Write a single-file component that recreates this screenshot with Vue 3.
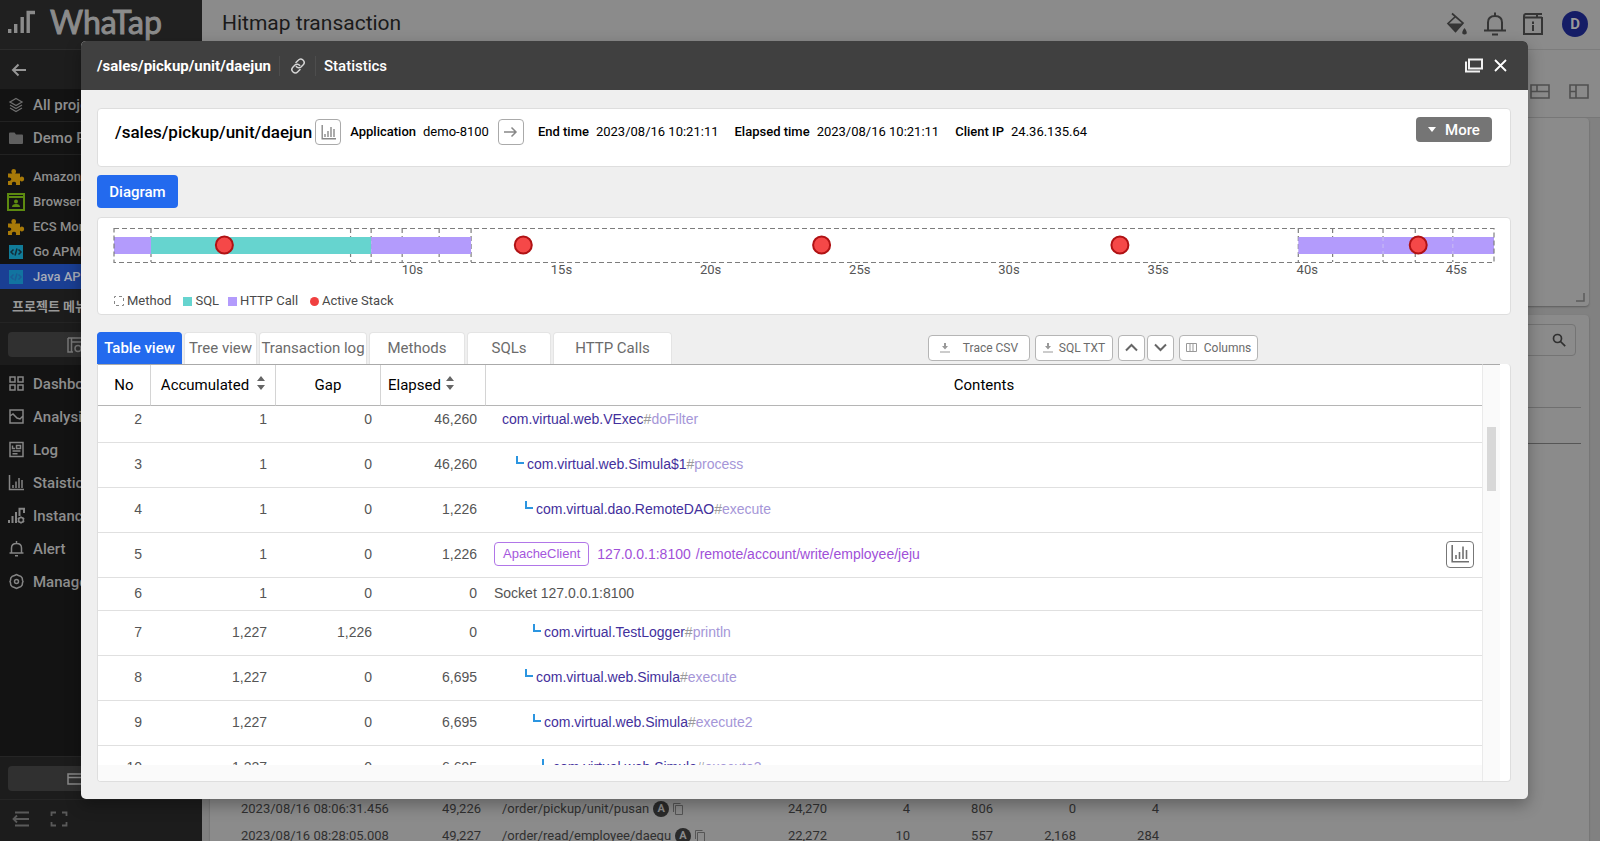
<script setup>
const products = [
  { name: 'Amazon CloudWatch', icon: 'puzzle' },
  { name: 'Browser', icon: 'browser' },
  { name: 'ECS Monitoring', icon: 'puzzle' },
  { name: 'Go APM', icon: 'code' },
  { name: 'Java APM', icon: 'code', active: true },
]
const menu = [
  { name: 'Dashboard', icon: 'grid' },
  { name: 'Analysis', icon: 'analysis' },
  { name: 'Log', icon: 'log' },
  { name: 'Staistics', icon: 'chart' },
  { name: 'Instance', icon: 'instance' },
  { name: 'Alert', icon: 'bell' },
  { name: 'Management', icon: 'gear' },
]
const hits = [
  { time: '2023/08/16 08:06:31.456', id: '49,226', path: '/order/pickup/unit/pusan', nums: ['24,270', '4', '806', '0', '4'] },
  { time: '2023/08/16 08:28:05.008', id: '49,227', path: '/order/read/employee/daegu', nums: ['22,272', '10', '557', '2,168', '284'] },
]

const total = 46.26
const pct = (t) => (t / total) * 100 + '%'
const segments = [
  { from: 0, to: 1.24, color: '#b39bfc' },
  { from: 1.24, to: 8.62, color: '#66d4cf' },
  { from: 8.62, to: 11.97, color: '#b39bfc' },
  { from: 39.7, to: 46.26, color: '#b39bfc' },
]
const methodEdges = [1.24, 7.93, 8.62, 9.66, 10.9, 11.97, 39.7, 40.85, 42.54, 43.62, 44.88]
const innerEdges = [42.54, 44.88]
const stacks = [3.7, 13.72, 23.72, 33.72, 43.72]
const ticks = [10, 15, 20, 25, 30, 35, 40, 45]

const tabs = ['Table view', 'Tree view', 'Transaction log', 'Methods', 'SQLs', 'HTTP Calls']
const rows = [
  { no: 2, acc: '1', gap: '0', elapsed: '46,260', depth: 0, cls: 'com.virtual.web.VExec', fn: 'doFilter' },
  { no: 3, acc: '1', gap: '0', elapsed: '46,260', depth: 1, cls: 'com.virtual.web.Simula$1', fn: 'process' },
  { no: 4, acc: '1', gap: '0', elapsed: '1,226', depth: 2, cls: 'com.virtual.dao.RemoteDAO', fn: 'execute' },
  { no: 5, acc: '1', gap: '0', elapsed: '1,226', kind: 'http' },
  { no: 6, acc: '1', gap: '0', elapsed: '0', kind: 'socket' },
  { no: 7, acc: '1,227', gap: '1,226', elapsed: '0', depth: 3, cls: 'com.virtual.TestLogger', fn: 'println' },
  { no: 8, acc: '1,227', gap: '0', elapsed: '6,695', depth: 2, cls: 'com.virtual.web.Simula', fn: 'execute' },
  { no: 9, acc: '1,227', gap: '0', elapsed: '6,695', depth: 3, cls: 'com.virtual.web.Simula', fn: 'execute2' },
  { no: 10, acc: '1,227', gap: '0', elapsed: '6,695', depth: 4, cls: 'com.virtual.web.Simula', fn: 'execute3' },
]
</script>

<template>
  <div class="shell">
    <aside class="side">
      <div class="brand">
        <svg width="28" height="24" viewBox="0 0 28 24" fill="none" stroke="#8b8b8b" stroke-width="3.400">
          <path d="M1.700 23v-4M7.700 23V14M14.200 23V7M20.200 23V2.500H27" />
        </svg>
        <span class="brand-name">WhaTap</span>
      </div>
      <button class="back" aria-label="Back">
        <svg width="16" height="14" viewBox="0 0 16 14" fill="none" stroke="#969696" stroke-width="2"><path d="M15 7H2M7.500 1.500 2 7l5.500 5.500" /></svg>
      </button>
      <a class="top-link" href="#">
        <svg width="16" height="16" viewBox="0 0 16 16" fill="none" stroke="#6f6f6f" stroke-width="1.300"><path d="M8 1.500 14 5 8 8.500 2 5zM2 8l6 3.500L14 8M2 11l6 3.500 6-3.500" /></svg>
        All projects
      </a>
      <a class="top-link" href="#">
        <svg width="16" height="16" viewBox="0 0 16 16" fill="#606060"><path d="M1 3.500q0-1 1-1h4.500l1.500 2H14q1 0 1 1v7.500q0 1-1 1H2q-1 0-1-1z" /></svg>
        Demo Project
      </a>
      <nav class="products">
        <a v-for="p in products" :key="p.name" href="#" :class="{ active: p.active }">
          <svg v-if="p.icon === 'puzzle'" width="18" height="18" viewBox="0 0 18 18" fill="#a87a08"><path d="M1 5.500h4.300Q4.300 4.600 4.300 3.300 4.500 1 6.700 1t2.400 2.300q0 1.300-1 2.200H13v4q.8-1 2-1Q17.200 8.700 17.200 11T15 13.400q-1.200 0-2-1V17H9q.7-3.300-2-3.300T5 17H1v-4q3.300 0 3.300-2T1 9.500z" /></svg>
          <svg v-else-if="p.icon === 'browser'" width="18" height="18" viewBox="0 0 18 18" fill="none"><path d="M1 1h16v16H1zM1 4h16" stroke="#5d8a10" stroke-width="2" /><circle cx="9" cy="8.500" r="2" fill="#5d8a10" /><path d="M5 14q0-3 4-3t4 3z" fill="#5d8a10" /></svg>
          <svg v-else width="18" height="18" viewBox="0 0 18 18" fill="none"><path d="M2 2h14v14H2z" :fill="p.active ? '#1274a0' : '#117c99'" /><path d="M6.500 6.500 4 9l2.500 2.500M11.500 6.500 14 9l-2.500 2.500M10 5.500l-2 7" :stroke="p.active ? '#1c5c96' : '#122c38'" stroke-width="1.500" /></svg>
          {{ p.name }}
        </a>
      </nav>
      <div class="menu-title">프로젝트 메뉴</div>
      <div class="side-action">
        <button aria-label="Project settings">
          <svg width="16" height="16" viewBox="0 0 16 16" fill="none" stroke="#777" stroke-width="1.500"><path d="M1 1h14v7M1 1v14h5M4.500 1v14M4.500 5H15" /><circle cx="11" cy="11.500" r="3" /></svg>
        </button>
      </div>
      <nav class="menu">
        <a v-for="m in menu" :key="m.name" href="#">
          <svg width="17" height="17" viewBox="0 0 17 17" fill="none" stroke="#858585" stroke-width="1.500">
            <path v-if="m.icon === 'grid'" d="M2 2h5v5H2zM10 2h5v5h-5zM2 10h5v5H2zM10 10h5v5h-5z" />
            <path v-else-if="m.icon === 'analysis'" d="M2 2h13v13H2zM2 8l3-2 4 4 3 1 3-3" />
            <path v-else-if="m.icon === 'log'" d="M2 1.500h13v14H2zM4.500 4.500v3H7M8.500 4.500h4v3h-4zM4.500 10h8M4.500 12.700h5" />
            <path v-else-if="m.icon === 'chart'" d="M1.500 1v14.500H16M5 14v-3M8 14V7.500M11 14V4M14 14V6" />
            <template v-else-if="m.icon === 'instance'">
              <path d="M1 16v-3M4.500 16V9M8 16V5M11.500 9V1.700H16V6" stroke-width="2" />
              <circle cx="13" cy="13" r="2.500" /><path d="M13 9.500v1.500M13 15v1.500M9.800 11.200l1.500.8M14.700 14l1.500.8M9.800 14.800l1.500-.8M14.700 12l1.500-.8" />
            </template>
            <path v-else-if="m.icon === 'bell'" d="M1.500 13h14M3.500 13V8q0-4.500 5-4.500t5 4.500v5M8.500 3.500V1M7 15.700h3" />
            <template v-else>
              <path d="m6.500 2.500 2-1 2 1 2.300.8 1.400 1.700.3 2.200.5 1.300-.5 1.300-.3 2.200-1.400 1.700-2.300.8-2 1-2-1-2.300-.8L2.800 12l-.3-2.200L2 8.500l.5-1.300.3-2.200 1.400-1.700z" /><circle cx="8.500" cy="8.500" r="2" />
            </template>
          </svg>
          {{ m.name }}
        </a>
      </nav>
      <div class="side-action bottom">
        <button aria-label="Billing">
          <svg width="16" height="12" viewBox="0 0 16 12" fill="none" stroke="#888" stroke-width="1.500"><path d="M1 1h15v10H1zM1 4.500h15" /></svg>
        </button>
      </div>
      <div class="side-foot">
        <button aria-label="Collapse menu"><svg width="18" height="16" viewBox="0 0 18 16" fill="none" stroke="#5a5a5a" stroke-width="1.800"><path d="M3 1.500h14M1.500 8H17M3 14.500h14M5 4.500 1.500 8 5 11.500" /></svg></button>
        <button aria-label="Full screen"><svg width="18" height="16" viewBox="0 0 18 16" fill="none" stroke="#5a5a5a" stroke-width="1.800"><path d="M1.500 5V1.500H6M12 1.500h4.500V5M16.500 11v3.500H12M6 14.500H1.500V11" /></svg></button>
      </div>
    </aside>

    <main class="page">
      <header class="page-head">
        <h1>Hitmap transaction</h1>
        <div class="head-icons">
          <svg width="22" height="24" viewBox="0 0 22 24" fill="none"><path d="M6 1.500 17 11l-7.500 8.500L2 11.500l7.500-7" stroke="#353535" stroke-width="1.700" /><path d="M2 11.500h15L9.500 20z" fill="#353535" /><path d="M18.500 16q2.200 2.700 2.200 4a2.200 2.200 0 0 1-2.200 2.500 2.200 2.200 0 0 1-2.200-2.500q0-1.300 2.200-4z" fill="#353535" /></svg>
          <svg width="22" height="24" viewBox="0 0 22 24" fill="none" stroke="#353535" stroke-width="2"><path d="M0 18.500h22M4 18V10.500Q4 4 11 4t7 6.500V18M11 4V.500M8 22.500h6" /></svg>
          <svg width="22" height="24" viewBox="0 0 22 24" fill="none" stroke="#353535" stroke-width="2"><path d="M20 5.500H3.500Q2 5.500 2 4T3.500 2H20M2 3.500V22h18V5M15 2v3M11 13v6M11 9.500V12" /></svg>
          <span class="avatar">D</span>
        </div>
      </header>
      <div class="page-tools">
        <svg width="20" height="15" viewBox="0 0 20 15" fill="none" stroke="#505050" stroke-width="1.600"><path d="M1 1h18v13H1zM1 7.500h18M7 1v6.500" /></svg>
        <svg width="20" height="15" viewBox="0 0 20 15" fill="none" stroke="#505050" stroke-width="1.600"><path d="M1 1h18v13H1zM7 1v13M1 7.500h6" /></svg>
      </div>
      <div class="page-body">
        <section class="bg-card chart-card">
          <svg width="9" height="9" viewBox="0 0 9 9" fill="none" stroke="#5c5c5c" stroke-width="1.500"><path d="M8 0v8H0" /></svg>
        </section>
        <section class="bg-card list-card">
          <label class="search">
            <input type="text" aria-label="Search" />
            <svg width="14" height="14" viewBox="0 0 14 14" fill="none" stroke="#303030" stroke-width="1.700"><circle cx="5.500" cy="5.500" r="4" /><path d="m8.500 8.500 4.700 4.700" /></svg>
          </label>
          <div class="list-head"></div>
          <table class="hits">
            <tbody>
              <tr v-for="h in hits" :key="h.id">
                <td class="c-time">{{ h.time }}</td>
                <td class="c-id">{{ h.id }}</td>
                <td class="c-path">
                  <span class="path-wrap">{{ h.path }}<b class="a-badge">A</b>
                    <svg width="10" height="12" viewBox="0 0 10 12" fill="none" stroke="#555" stroke-width="1"><path d="M2.500 2.500h7v9h-7zM.5 9V.500h7" /></svg>
                  </span>
                </td>
                <td v-for="(n, i) in h.nums" :key="i" class="c-num">{{ n }}</td>
                <td></td>
              </tr>
            </tbody>
          </table>
        </section>
      </div>
    </main>

    <div class="modal" role="dialog" aria-label="Transaction detail">
      <header class="modal-head">
        <strong>/sales/pickup/unit/daejun</strong>
        <button class="link-btn" aria-label="Copy link">
          <svg width="16" height="16" viewBox="0 0 16 16" fill="none" stroke="#d4d4d4" stroke-width="1.500" stroke-linecap="round"><path d="m6 4.500 2.200-2.200a3.200 3.200 0 0 1 5 4.500L11 9a3.200 3.200 0 0 1-4.700-.5" /><path d="m10 11.500-2.200 2.200a3.200 3.200 0 0 1-5-4.500L5 7a3.200 3.200 0 0 1 4.700.5" /></svg>
        </button>
        <a href="#">Statistics</a>
        <div class="win">
          <button aria-label="Open in window"><svg width="18" height="15" viewBox="0 0 18 15" fill="none" stroke="#f2f2f2" stroke-width="2"><path d="M4 1.500h13v9H4z" /><path d="M1 3.500V13.500h14" /></svg></button>
          <button aria-label="Close"><svg width="13" height="13" viewBox="0 0 13 13" fill="none" stroke="#fff" stroke-width="1.800"><path d="m1 1 11 11M12 1 1 12" /></svg></button>
        </div>
      </header>

      <div class="modal-body">
        <section class="card info">
          <h2>/sales/pickup/unit/daejun</h2>
          <button class="sq" aria-label="Statistics chart">
            <svg width="15" height="15" viewBox="0 0 15 15" fill="none" stroke="#888" stroke-width="1.400"><path d="M1.200 0v13.800H15M4 12V9M7 12V6M10 12V2M13 12V4" /></svg>
          </button>
          <dl>
            <div><dt>Application</dt><dd>demo-8100</dd></div>
          </dl>
          <button class="sq" aria-label="Go to application">
            <svg width="14" height="12" viewBox="0 0 14 12" fill="none" stroke="#888" stroke-width="1.500"><path d="M0 6h12M7.500 1.500 12 6l-4.500 4.500" /></svg>
          </button>
          <dl class="times">
            <div><dt>End time</dt><dd>2023/08/16 10:21:11</dd></div>
            <div><dt>Elapsed time</dt><dd>2023/08/16 10:21:11</dd></div>
            <div><dt>Client IP</dt><dd>24.36.135.64</dd></div>
          </dl>
          <button class="more"><svg width="8" height="5" viewBox="0 0 8 5" fill="#fff"><path d="M0 0h8L4 5z" /></svg>More</button>
        </section>

        <button class="diagram-btn">Diagram</button>

        <section class="card diagram">
          <svg class="timeline" width="100%" height="54">
            <g stroke="#7d7d7d" stroke-width="1.200" stroke-dasharray="5 3" fill="none">
              <line v-for="e in methodEdges" :key="e" :x1="pct(e)" :x2="pct(e)" y1="0" y2="34" />
            </g>
            <rect v-for="s in segments" :key="s.from" :x="pct(s.from)" y="9" :width="pct(s.to - s.from)" height="17" :fill="s.color" />
            <line v-for="e in innerEdges" :key="e" :x1="pct(e)" :x2="pct(e)" y1="9" y2="26" stroke="#c9bdf2" stroke-dasharray="4 3" />
            <rect x="0" y="0.500" width="100%" height="34" fill="none" stroke="#7d7d7d" stroke-width="1.200" stroke-dasharray="5 3" />
            <circle v-for="s in stacks" :key="s" :cx="pct(s)" cy="17" r="8.500" fill="#f54848" stroke="#b01214" stroke-width="2" />
            <text v-for="t in ticks" :key="t" :x="pct(t)" y="46" text-anchor="middle">{{ t }}s</text>
          </svg>
          <ul class="legend">
            <li><svg width="10" height="10" viewBox="0 0 10 10"><rect x=".5" y=".5" width="9" height="9" fill="none" stroke="#888" stroke-dasharray="3 3" stroke-dashoffset="1.500" /></svg>Method</li>
            <li><i class="dot sql"></i>SQL</li>
            <li><i class="dot http"></i>HTTP Call</li>
            <li><i class="dot stack"></i>Active Stack</li>
          </ul>
        </section>

        <div class="bar">
          <div class="tabs" role="tablist">
            <button v-for="(t, i) in tabs" :key="t" role="tab" :aria-selected="i === 0" :class="{ on: i === 0 }">{{ t }}</button>
          </div>
          <div class="tools">
            <button class="csv"><svg width="10" height="10" viewBox="0 0 10 10" fill="#999"><path d="M4 0h2v3h2L5 6.500 2 3h2zM0 8.500h10v1H0z" /></svg>Trace CSV</button>
            <button class="txt"><svg width="10" height="10" viewBox="0 0 10 10" fill="#999"><path d="M4 0h2v3h2L5 6.500 2 3h2zM0 8.500h10v1H0z" /></svg>SQL TXT</button>
            <div class="pair">
              <button aria-label="Previous"><svg width="13" height="9" viewBox="0 0 13 9" fill="none" stroke="#666" stroke-width="2"><path d="m1 7.500 5.500-5.500L12 7.500" /></svg></button>
              <button aria-label="Next"><svg width="13" height="9" viewBox="0 0 13 9" fill="none" stroke="#666" stroke-width="2"><path d="m1 1.500 5.500 5.500L12 1.500" /></svg></button>
            </div>
            <button class="cols"><svg width="11" height="9" viewBox="0 0 11 9" fill="none" stroke="#999"><path d="M.5.500h10v8H.500zM4 .500v8M7 .500v8" /></svg>Columns</button>
          </div>
        </div>

        <section class="grid-card">
          <div class="grid-view">
            <table class="trace">
              <colgroup><col class="w-no" /><col class="w-acc" /><col class="w-gap" /><col class="w-el" /><col /></colgroup>
              <thead>
                <tr>
                  <th>No</th>
                  <th>Accumulated<svg width="8" height="14" viewBox="0 0 8 14" fill="#666"><path d="M0 5h8L4 0zM0 9h8l-4 5z" /></svg></th>
                  <th>Gap</th>
                  <th class="left">Elapsed<svg width="8" height="14" viewBox="0 0 8 14" fill="#666"><path d="M0 5h8L4 0zM0 9h8l-4 5z" /></svg></th>
                  <th>Contents</th>
                </tr>
              </thead>
              <tbody>
                <tr v-for="r in rows" :key="r.no" :class="{ short: r.kind === 'socket', cut: r.no === 2 }">
                  <td>{{ r.no }}</td>
                  <td>{{ r.acc }}</td>
                  <td>{{ r.gap }}</td>
                  <td>{{ r.elapsed }}</td>
                  <td class="content">
                    <div v-if="r.kind === 'http'" class="http-row">
                      <span class="client">ApacheClient</span>
                      <span class="url">127.0.0.1:8100</span>
                      <span class="url">/remote/account/write/employee/jeju</span>
                      <button aria-label="Call statistics">
                        <svg width="18" height="18" viewBox="0 0 18 18" fill="none" stroke="#707070" stroke-width="1.600"><path d="M1.200 0v16.800H18M5 14v-4M8.500 14V7M12 14V1.500M15.500 14V5" /></svg>
                      </button>
                    </div>
                    <template v-else-if="r.kind === 'socket'">Socket 127.0.0.1:8100</template>
                    <div v-else class="call" :class="'d' + r.depth">
                      <i v-if="r.depth" class="elbow"></i><span>{{ r.cls }}</span><em>#</em><u>{{ r.fn }}</u>
                    </div>
                  </td>
                </tr>
              </tbody>
            </table>
          </div>
          <div class="scroll"><i></i></div>
        </section>
      </div>
    </div>
  </div>
</template>

<style>
body { margin: 0; overflow: hidden; }
</style>

<style scoped>
* { box-sizing: border-box; }
.shell { position: relative; display: flex; height: 100vh; overflow: hidden; font-family: Roboto, "Noto Sans CJK KR", sans-serif; font-size: 14px; background: #858585; }
button { font: inherit; border: 0; background: none; padding: 0; margin: 0; color: inherit; display: flex; align-items: center; justify-content: center; }
a { color: inherit; text-decoration: none; }
svg { flex: none; display: block; }

.side { width: 202px; flex: none; background: #131313; color: #8e8e8e; display: flex; flex-direction: column; font-size: 15px; font-weight: 500; }
.brand { height: 50px; background: #202020; border-bottom: 1px solid #2c2c2c; display: flex; align-items: center; gap: 14px; padding: 0 8px 6px; }
.brand-name { font-family: Lato, sans-serif; font-weight: 400; font-size: 32px; line-height: 40px; color: #8b8b8b; -webkit-text-stroke: 1px #8b8b8b; }
.back { height: 39px; background: #1d1d1d; justify-content: flex-start; padding-left: 11px; }
.top-link { height: 33px; display: flex; align-items: center; gap: 9px; padding-left: 8px; border-bottom: 1px solid #222; }
.products { padding-top: 9px; font-size: 13px; }
.products a { height: 25px; display: flex; align-items: center; gap: 8px; padding-left: 7px; }
.products a.active { background: #1a3f94; color: #a6acb8; }
.menu-title { height: 34px; display: flex; align-items: center; padding-left: 12px; background: #1c1c1c; border-bottom: 1px solid #242424; font-size: 13px; font-weight: 700; color: #999; }
.side-action { background: #1c1c1c; padding: 9px 8px 8px; }
.side-action button { width: 100%; height: 25px; background: #303030; border-radius: 4px; justify-content: flex-start; padding-left: 59px; }
.menu { flex: 1; padding-top: 2px; }
.menu a { height: 33px; display: flex; align-items: center; gap: 8px; padding-left: 8px; }
.bottom { border-top: 1px solid #252525; border-bottom: 1px solid #252525; }
.side-foot { background: #1c1c1c; height: 41px; display: flex; gap: 20px; align-items: center; padding: 0 12px 4px; }

.page { flex: 1; min-width: 0; display: flex; flex-direction: column; }
.page-head { height: 50px; flex: none; background: #8b8b8b; border-bottom: 1px solid #7c7c7c; display: flex; align-items: center; justify-content: space-between; padding: 0 12px 2px 20px; }
h1 { margin: 0; padding-bottom: 2px; font-size: 21px; line-height: 28px; font-weight: 400; color: #1a1a1a; }
.head-icons { display: flex; align-items: center; gap: 16px; }
.avatar { width: 26px; height: 26px; margin-left: 2px; border-radius: 50%; background: #151d66; color: #999; font-size: 15px; font-weight: 700; display: flex; align-items: center; justify-content: center; }
.page-tools { height: 68px; flex: none; background: #8a8a8a; border-bottom: 1px solid #777; display: flex; justify-content: flex-end; align-items: center; gap: 19px; padding: 16px 11px 0 0; }
.page-body { flex: 1; min-height: 0; overflow: hidden; padding: 0 11px 0 8px; display: flex; flex-direction: column; gap: 9px; background: #818181; }
.bg-card { background: #8b8b8b; border-radius: 4px; box-shadow: 0 1px 2px #5d5d5d; }
.chart-card { height: 188px; flex: none; display: flex; justify-content: flex-end; align-items: flex-end; padding: 4px; }
.list-card { flex: none; height: 560px; padding: 9px 8px 0; }
.search { display: flex; align-items: center; height: 32px; margin-right: 5px; border: 1px solid #747474; border-radius: 4px; padding-right: 9px; }
.search input { flex: 1; border: 0; background: none; outline: none; }
.list-head { margin-top: 51px; height: 37px; border-top: 1px solid #6f6f6f; border-bottom: 1px solid #565656; }
.hits { margin-top: 351px; width: 100%; border-collapse: collapse; table-layout: fixed; color: #303030; font-size: 13px; }
.hits td { height: 27px; padding: 0; }
.hits .c-time { width: 177px; padding-left: 23px; white-space: nowrap; }
.c-id { width: 86px; text-align: right; }
.hits .c-path { width: 263px; padding-left: 21px; }
.c-num { width: 83px; text-align: right; }
.path-wrap { display: flex; align-items: center; gap: 4px; }
.a-badge { width: 16px; height: 16px; border-radius: 50%; background: #2a2a2a; color: #8b8b8b; font-size: 11px; line-height: 16px; text-align: center; }

.modal { position: absolute; inset: 41px 72px 42px 81px; background: #efefef; border-radius: 5px; overflow: hidden; display: flex; flex-direction: column; color: #000; box-shadow: 0 6px 16px rgba(0, 0, 0, 0.3); }
.modal-head { height: 49px; flex: none; background: #404040; color: #fff; display: flex; align-items: center; padding: 0 21px 0 16px; font-size: 15px; font-weight: 500; }
.modal-head strong { font-weight: 700; }
.link-btn { width: 37px; height: 20px; margin: 0 8px; border-left: 1px solid #4d4d4d; border-right: 1px solid #4d4d4d; }
.win { margin-left: auto; display: flex; gap: 11px; align-items: center; }
.modal-body { flex: 1; min-height: 0; display: flex; flex-direction: column; padding: 18px 17px 17px 16px; }
.card { background: #fff; border: 1px solid #dedede; border-radius: 4px; flex: none; }
.info { height: 59px; display: flex; align-items: flex-start; padding: 8px 18px 0 17px; line-height: 30px; }
.info h2 { margin: 0; font-size: 17px; font-weight: 500; padding-right: 3px; }
.sq { width: 26px; height: 26px; margin-top: 2px; border: 1px solid #aaa; border-radius: 4px; }
.info dl { margin: 0; display: flex; font-size: 13px; }
.info dl div { display: flex; padding: 0 9px; gap: 7px; }
.info .times { gap: 2px; }
.info .times div { padding: 0 0 0 14px; }
dt { font-weight: 500; }
dd { margin: 0; }
.more { margin-left: auto; width: 76px; height: 25px; background: #757575; color: #fff; border-radius: 4px; gap: 9px; font-size: 15px; font-weight: 500; }
.diagram-btn { flex: none; width: 81px; height: 33px; margin: 8px 0 9px; background: #236aee; color: #fff; border-radius: 4px; font-size: 15px; font-weight: 500; }
.diagram { height: 98px; padding: 10px 16px 0; }
.timeline { overflow: visible; }
.timeline text { font-size: 13px; fill: #555; }
.legend { list-style: none; margin: 11px 0 0; padding: 0; display: flex; font-size: 13px; line-height: 16px; color: #4a4a4a; }
.legend li { display: flex; align-items: center; gap: 3px; margin-right: 12px; }
.legend li:nth-child(2) { margin-right: 9px; }
.dot { width: 9px; height: 9px; }
.sql { background: #66d4cf; }
.http { background: #b39bfc; }
.stack { background: #f04040; border-radius: 50%; }

.bar { display: flex; margin-top: 17px; flex: none; height: 32px; }
.tabs { display: grid; grid-template-columns: 85px 73px 108px 96px 84px 119px; gap: 2px; font-size: 15px; color: #6b6b6b; }
.tabs button { background: #fff; border: 1px solid #e4e4e4; border-bottom: 0; border-radius: 4px 4px 0 0; white-space: nowrap; padding-bottom: 2px; }
.tabs .on { background: #236aee; border-color: #236aee; color: #fff; font-weight: 500; }
.tools { margin: 3px 253px 0 auto; display: flex; gap: 5px; font-size: 12px; color: #6b6b6b; }
.tools button { height: 26px; background: #fff; border: 1px solid #b5b5b5; border-radius: 4px; white-space: nowrap; padding-bottom: 1px; }
.csv { width: 102px; gap: 13px; }
.txt { width: 78px; gap: 6px; }
.pair { display: flex; gap: 2px; }
.pair button { width: 27px; }
.cols { width: 79px; gap: 7px; }

.grid-card { flex: 1; min-height: 0; display: flex; background: #fff; border: 1px solid #dedede; border-top: 0; border-radius: 0 4px 4px 4px; padding-right: 10px; overflow: hidden; }
.grid-view { flex: 1; min-width: 0; overflow: hidden; border-bottom: 16px solid #fafafa; border-top: 1px solid #aaa; }
.trace { width: 100%; border-collapse: separate; border-spacing: 0; table-layout: fixed; }
.w-no { width: 53px; }
.w-acc { width: 125px; }
.w-gap { width: 105px; }
.w-el { width: 105px; }
.trace th { height: 41px; padding: 0; font-size: 15px; font-weight: 400; border-right: 1px solid #d4d4d4; border-bottom: 1px solid #b5b5b5; }
.trace th:last-child { border-right: 0; }
.trace th svg { display: inline-block; margin-left: 8px; }
.trace th.left { text-align: left; padding-left: 7px; }
.trace th.left svg { margin-left: 5px; }
.trace td { height: 45px; padding: 0 9px 2px 0; text-align: right; border-bottom: 1px solid #e0e0e0; font-family: "Liberation Sans", Arial, sans-serif; font-size: 14px; line-height: 16px; color: #555; }
.trace .short td { height: 33px; }
.trace .cut td { height: 37px; padding-bottom: 11px; }
.trace .content { text-align: left; padding-left: 8px; padding-right: 8px; }
.http-row { display: flex; align-items: center; }
.client { border: 1px solid #b176e8; border-radius: 4px; color: #a557dd; font-size: 13px; line-height: 22px; padding: 0 8px; margin-right: 8px; }
.url { color: #a04fd8; margin-right: 5px; }
.http-row button { margin-left: auto; width: 28px; height: 27px; border: 1px solid #777; border-radius: 4px; }
.call { display: flex; color: #43309c; }
.call em { font-style: normal; color: #999; }
.call u { text-decoration: none; color: #a596d8; }
.elbow { width: 8px; height: 8px; border: solid #2b95e0; border-width: 0 0 2px 2px; margin-right: 3px; }
.d0 { padding-left: 8px; }
.d1 { padding-left: 22px; }
.d2 { padding-left: 31px; }
.d3 { padding-left: 39px; }
.d4 { padding-left: 48px; }
.scroll { width: 18px; background: #fafafa; border-left: 1px solid #eaeaea; border-top: 1px solid #aaa; padding: 62px 4px 0; }
.scroll i { display: block; height: 64px; background: #d8d8d8; }
</style>
